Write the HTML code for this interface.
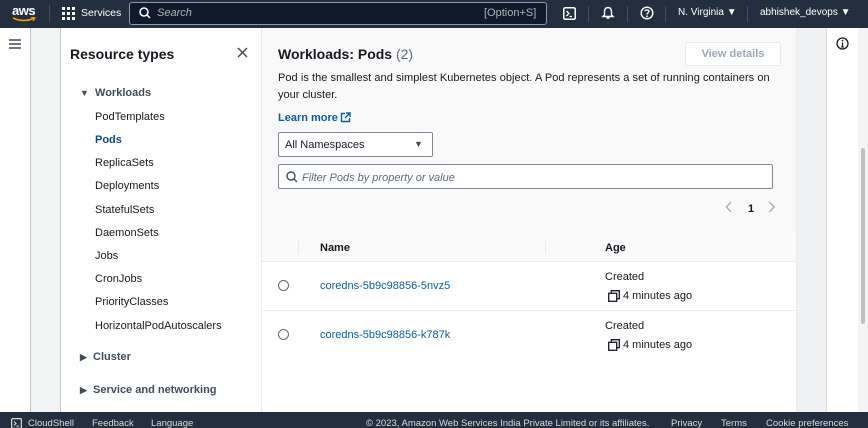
<!DOCTYPE html>
<html><head><meta charset="utf-8"><style>
*{margin:0;padding:0;box-sizing:border-box}
body{width:868px;height:428px;overflow:hidden;position:relative;background:#fff;font-family:"Liberation Sans",sans-serif;color:#16191f;font-size:11px}
.a{position:absolute;white-space:nowrap}
.top{left:0;top:0;width:868px;height:28px;background:#232f3e;color:#fff}
.foot{left:0;top:412px;width:868px;height:16px;background:#232f3e;color:#d5dbdb;font-size:9.5px;overflow:hidden}
.b{font-weight:bold}
.link{color:#0a5ea8}
.nav{left:95px;font-size:11px;color:#16191f}
.m{margin-top:1px}
</style></head><body>
<div class="a top">
  <div class="a" style="left:12px;top:3px;font-size:13px;font-weight:bold;letter-spacing:-0.5px">aws</div>
  <svg class="a" style="left:12px;top:17px" width="24" height="6"><path d="M1 1 Q12 6 22 1" stroke="#ff9900" stroke-width="1.6" fill="none"/><path d="M19 0 L23 1 L21 4" stroke="#ff9900" stroke-width="1.2" fill="none"/></svg>
  <div class="a" style="left:49px;top:5px;width:1px;height:18px;background:#414d5c"></div>
  <svg class="a" style="left:62px;top:7px" width="13" height="13" fill="#fff"><rect x="0" y="0" width="3" height="3"/><rect x="5" y="0" width="3" height="3"/><rect x="10" y="0" width="3" height="3"/><rect x="0" y="5" width="3" height="3"/><rect x="5" y="5" width="3" height="3"/><rect x="10" y="5" width="3" height="3"/><rect x="0" y="10" width="3" height="3"/><rect x="5" y="10" width="3" height="3"/><rect x="10" y="10" width="3" height="3"/></svg>
  <div class="a" style="left:81px;top:7px;font-size:10.5px">Services</div>
  <div class="a" style="left:129px;top:2px;width:418px;height:23px;background:#0f1b2a;border:1px solid #8d99a8;border-radius:3px"></div>
  <svg class="a" style="left:139px;top:7px" width="12" height="12"><circle cx="5" cy="5" r="4" stroke="#fff" stroke-width="1.5" fill="none"/><path d="M8 8 L11 11" stroke="#fff" stroke-width="1.5"/></svg>
  <div class="a" style="left:157px;top:7px;font-style:italic;color:#aab7b8">Search</div>
  <div class="a" style="left:484px;top:7px;color:#aab7b8">[Option+S]</div>
  <svg class="a" style="left:563px;top:7px" width="13" height="13"><rect x="0.75" y="0.75" width="11.5" height="11.5" rx="1.5" stroke="#fff" stroke-width="1.5" fill="none"/><path d="M3.5 4 L6 6.5 L3.5 9 M6.5 9.5 H9" stroke="#fff" stroke-width="1.3" fill="none"/></svg>
  <div class="a" style="left:588px;top:6px;width:1px;height:16px;background:#414d5c"></div>
  <svg class="a" style="left:601px;top:6px" width="14" height="14"><path d="M7 1.5 C4 1.5 3.5 4 3.5 6 V9 L2 10.5 H12 L10.5 9 V6 C10.5 4 10 1.5 7 1.5 Z M5.5 12 H8.5" stroke="#fff" stroke-width="1.4" fill="none"/></svg>
  <div class="a" style="left:627px;top:6px;width:1px;height:16px;background:#414d5c"></div>
  <svg class="a" style="left:640px;top:6px" width="14" height="14"><circle cx="7" cy="7" r="5.8" stroke="#fff" stroke-width="1.4" fill="none"/><path d="M5 5.3 C5 3.5 9 3.5 9 5.4 C9 6.8 7 6.8 7 8.5" stroke="#fff" stroke-width="1.3" fill="none"/><circle cx="7" cy="10.3" r="0.9" fill="#fff"/></svg>
  <div class="a" style="left:665px;top:6px;width:1px;height:16px;background:#414d5c"></div>
  <div class="a" style="left:678px;top:7px;font-size:10px">N. Virginia ▼</div>
  <div class="a" style="left:747px;top:6px;width:1px;height:16px;background:#414d5c"></div>
  <div class="a" style="left:760px;top:7px;font-size:10px">abhishek_devops ▼</div>
</div>

<div class="a" style="left:30px;top:28px;width:1px;height:384px;background:#c6c6cd"></div>
<svg class="a" style="left:9px;top:39px" width="12" height="10"><path d="M0 1 H12 M0 5 H12 M0 9 H12" stroke="#414d5c" stroke-width="1.4"/></svg>
<div class="a" style="left:31px;top:28px;width:29px;height:384px;background:#f2f3f3"></div>
<div class="a" style="left:60px;top:28px;width:1px;height:384px;background:#c6c6cd"></div>
<div class="a" style="left:261px;top:28px;width:1px;height:384px;background:#e9ebed"></div>

<div class="a b m" style="left:70px;top:45px;font-size:14px">Resource types</div>
<svg class="a" style="left:237px;top:47px" width="11" height="11"><path d="M1 1 L10 10 M10 1 L1 10" stroke="#414d5c" stroke-width="1.5"/></svg>
<div class="a b m" style="left:80px;top:86px;font-size:11px;color:#414d5c"><span style="font-size:9px">▼</span>&nbsp; Workloads</div>
<div class="a nav m" style="top:110px">PodTemplates</div>
<div class="a nav b m" style="top:133px;color:#0a4a8a">Pods</div>
<div class="a nav m" style="top:156px">ReplicaSets</div>
<div class="a nav m" style="top:179px">Deployments</div>
<div class="a nav m" style="top:203px">StatefulSets</div>
<div class="a nav m" style="top:226px">DaemonSets</div>
<div class="a nav m" style="top:249px">Jobs</div>
<div class="a nav m" style="top:272px">CronJobs</div>
<div class="a nav m" style="top:295px">PriorityClasses</div>
<div class="a nav m" style="top:319px">HorizontalPodAutoscalers</div>
<div class="a b m" style="left:80px;top:350px;color:#414d5c"><span style="font-size:9px">▶</span>&nbsp; Cluster</div>
<div class="a b m" style="left:80px;top:383px;color:#414d5c"><span style="font-size:9px">▶</span>&nbsp; Service and networking</div>

<div class="a" style="left:262px;top:28px;width:535px;height:204px;background:#f9f9fa"></div>
<div class="a" style="left:262px;top:232px;width:535px;height:30px;background:#fafafa;border-bottom:1px solid #e9ebed"></div>
<div class="a" style="left:796px;top:28px;width:1px;height:384px;background:#e9ebed"></div>
<div class="a" style="left:797px;top:28px;width:29px;height:384px;background:#f0f1f3"></div>
<div class="a" style="left:826px;top:28px;width:1px;height:384px;background:#dcdde0"></div>
<div class="a" style="left:858px;top:28px;width:10px;height:384px;background:#f4f4f4"></div>
<div class="a" style="left:861px;top:148px;width:4px;height:176px;background:#c0c0c0;border-radius:2px"></div>
<svg class="a" style="left:836px;top:37px" width="13" height="13"><circle cx="6.5" cy="6.5" r="5.5" stroke="#16191f" stroke-width="1.3" fill="none"/><path d="M6.5 5.5 V10 M5.3 10 H7.8" stroke="#16191f" stroke-width="1.3"/><circle cx="6.5" cy="3.6" r="0.9" fill="#16191f"/></svg>

<div class="a m" style="left:278px;top:45px;font-size:14px"><b>Workloads: Pods</b> <span style="color:#5f6b7a">(2)</span></div>
<div class="a" style="left:685px;top:42px;width:96px;height:24px;border:1px solid #e9ebed;border-radius:2px;background:#fff;color:#9ba7b6;font-weight:bold;text-align:center;line-height:22px">View details</div>
<div class="a m" style="left:278px;top:71px;letter-spacing:0.05px">Pod is the smallest and simplest Kubernetes object. A Pod represents a set of running containers on</div>
<div class="a m" style="left:278px;top:88px">your cluster.</div>
<div class="a b link m" style="left:278px;top:111px">Learn more</div>
<svg class="a" style="left:340px;top:112px" width="11" height="11"><path d="M5 1.5 H1.5 V9.5 H9.5 V6 M6 1 H10 V5 M10 1 L5 6" stroke="#0a5ea8" stroke-width="1.4" fill="none"/></svg>
<div class="a" style="left:278px;top:132px;width:155px;height:25px;border:1px solid #7d8998;border-radius:2px;background:#fff"></div>
<div class="a m" style="left:285px;top:138px">All Namespaces</div>
<div class="a m" style="left:414px;top:138px;font-size:9px;color:#414d5c">▼</div>
<div class="a" style="left:278px;top:164px;width:495px;height:25px;border:1px solid #7d8998;border-radius:2px;background:#fff"></div>
<svg class="a" style="left:286px;top:171px" width="12" height="12"><circle cx="5" cy="5" r="4" stroke="#414d5c" stroke-width="1.4" fill="none"/><path d="M8 8 L11 11" stroke="#414d5c" stroke-width="1.4"/></svg>
<div class="a m" style="left:302px;top:171px;font-style:italic;color:#5f6b7a">Filter Pods by property or value</div>
<svg class="a" style="left:725px;top:201px" width="8" height="12"><path d="M6 1 L1.5 6 L6 11" stroke="#9ba7b6" stroke-width="1.3" fill="none"/></svg>
<div class="a b m" style="left:748px;top:202px">1</div>
<svg class="a" style="left:768px;top:201px" width="8" height="12"><path d="M1.5 1 L6 6 L1.5 11" stroke="#9ba7b6" stroke-width="1.3" fill="none"/></svg>

<div class="a" style="left:298px;top:240px;width:1px;height:14px;background:#e9ebed"></div>
<div class="a" style="left:545px;top:240px;width:1px;height:14px;background:#e9ebed"></div>
<div class="a b m" style="left:320px;top:241px">Name</div>
<div class="a b m" style="left:605px;top:241px">Age</div>

<div class="a" style="left:278px;top:280px;width:11px;height:11px;border:1.3px solid #5f6b7a;border-radius:50%"></div>
<div class="a link m" style="left:320px;top:279px">coredns-5b9c98856-5nvz5</div>
<div class="a m" style="left:605px;top:270px">Created</div>
<svg class="a" style="left:608px;top:290px" width="12" height="12"><rect x="0.7" y="3.3" width="8" height="8" stroke="#16191f" stroke-width="1.3" fill="none"/><path d="M3.3 3 V0.7 H11.3 V8.7 H9" stroke="#16191f" stroke-width="1.3" fill="none"/></svg>
<div class="a m" style="left:623px;top:289px">4 minutes ago</div>
<div class="a" style="left:262px;top:310px;width:535px;height:1px;background:#eceef0"></div>

<div class="a" style="left:278px;top:329px;width:11px;height:11px;border:1.3px solid #5f6b7a;border-radius:50%"></div>
<div class="a link m" style="left:320px;top:328px">coredns-5b9c98856-k787k</div>
<div class="a m" style="left:605px;top:319px">Created</div>
<svg class="a" style="left:608px;top:339px" width="12" height="12"><rect x="0.7" y="3.3" width="8" height="8" stroke="#16191f" stroke-width="1.3" fill="none"/><path d="M3.3 3 V0.7 H11.3 V8.7 H9" stroke="#16191f" stroke-width="1.3" fill="none"/></svg>
<div class="a m" style="left:623px;top:338px">4 minutes ago</div>

<div class="a foot">
  <svg class="a" style="left:11px;top:6px" width="11" height="11"><rect x="0.6" y="0.6" width="9.8" height="9.8" rx="1" stroke="#d5dbdb" stroke-width="1.2" fill="none"/><path d="M3 3.5 L5 5.5 L3 7.5 M5.5 8 H8" stroke="#d5dbdb" stroke-width="1.1" fill="none"/></svg>
  <div class="a" style="left:28px;top:6px">CloudShell</div>
  <div class="a" style="left:92px;top:6px">Feedback</div>
  <div class="a" style="left:151px;top:6px">Language</div>
  <div class="a" style="left:366px;top:6px">© 2023, Amazon Web Services India Private Limited or its affiliates.</div>
  <div class="a" style="left:671px;top:6px">Privacy</div>
  <div class="a" style="left:721px;top:6px">Terms</div>
  <div class="a" style="left:766px;top:6px">Cookie preferences</div>
</div>
</body></html>
